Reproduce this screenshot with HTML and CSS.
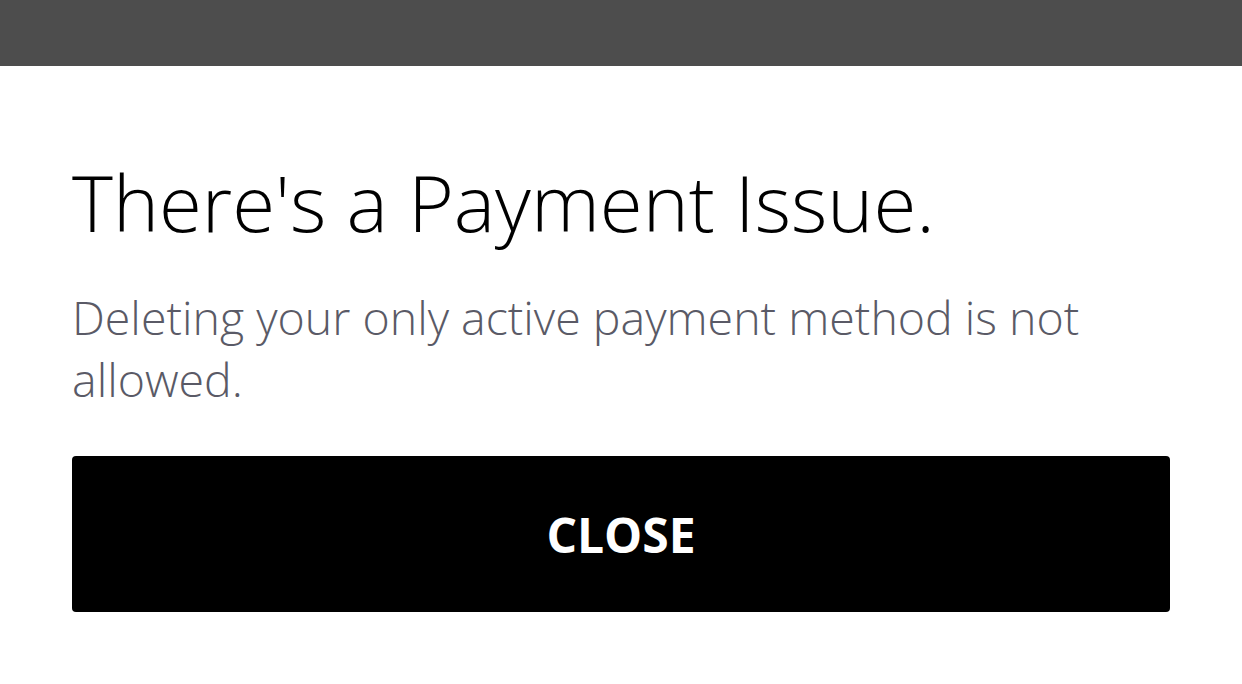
FILE: index.html
```html
<!DOCTYPE html>
<html lang="en">
<head>
    <meta charset="UTF-8">
    <meta name="viewport" content="width=device-width, initial-scale=1.0">
    <title>Payment Issue</title>
    <link rel="stylesheet" href="styles.css">
</head>
<body>

    <div class="top-bar"></div>

    <div class="dialog">
        <h1 class="dialog-title">There's a Payment Issue.</h1>
        <p class="dialog-text">Deleting your only active payment method is not allowed.</p>
        <button class="close-btn">CLOSE</button>
    </div>

</body>
</html>
```

FILE: styles.css
```css
/* Page */
body {
    margin: 0;
    background: #ffffff;
    font-family: "Open Sans", "DejaVu Sans", sans-serif;
}

/* Dark strip at the top */
.top-bar {
    height: 66px;
    background: #4d4d4d;
}

/* Dialog content */
.dialog {
    padding: 0 72px;
}

.dialog-title {
    margin: 0;
    padding-top: 80px;
    font-size: 78px;
    font-weight: 300;
    line-height: 112px;
    color: #000000;
}

.dialog-text {
    margin: 28px 0 0;
    font-size: 46.5px;
    font-weight: 300;
    line-height: 62px;
    color: #5a5a66;
}

/* Close button */
.close-btn {
    display: block;
    width: 100%;
    height: 156px;
    margin-top: 46px;
    border: none;
    border-radius: 4px;
    background: #000000;
    color: #ffffff;
    font-family: "Open Sans", "DejaVu Sans", sans-serif;
    font-size: 48px;
    font-weight: 700;
    cursor: pointer;
}
```
